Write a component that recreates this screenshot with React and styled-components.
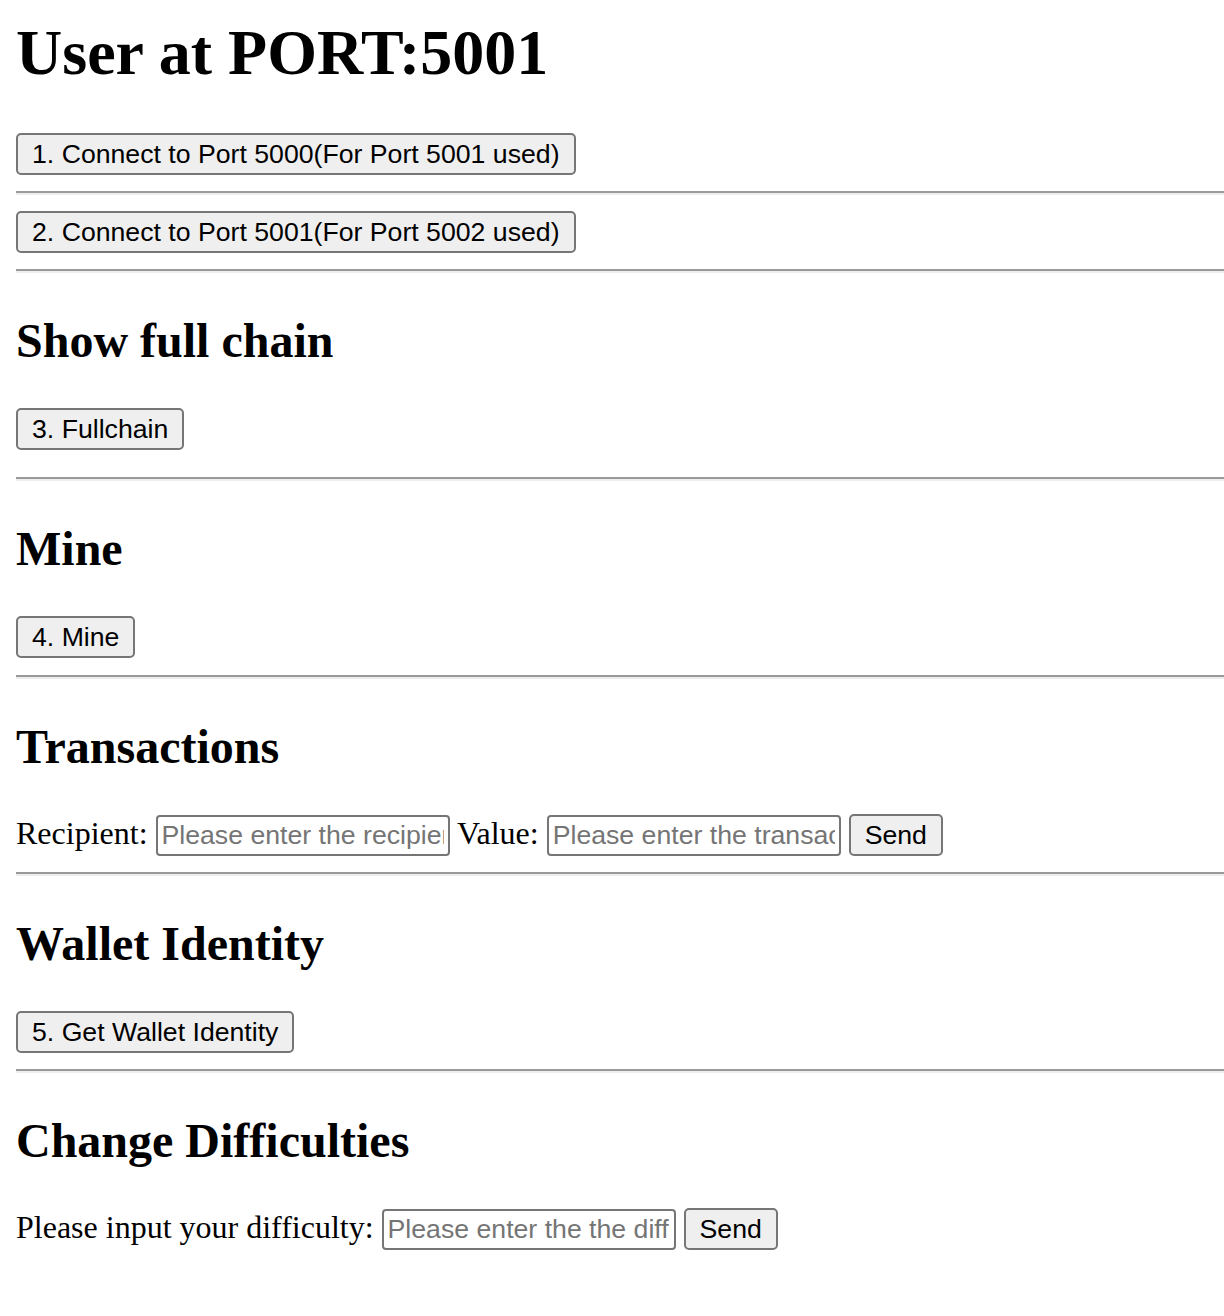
import React, { useState } from 'react';
import styled, { createGlobalStyle } from 'styled-components';

const GlobalStyle = createGlobalStyle`
  body {
    margin: 16px 0 0 16px;
    font-family: 'Liberation Serif', 'Times New Roman', serif;
    font-size: 32px;
    color: #000;
    background: #fff;
  }
`;

const Title = styled.h1`
  font-size: 64px;
  font-weight: bold;
  margin: 0 0 43px;
`;

const SectionTitle = styled.h2`
  font-size: 48px;
  font-weight: bold;
  margin: 40px 0;
`;

const Row = styled.div`
  font-size: 32px;
  padding-bottom: ${(p) => p.$extra || 0}px;
`;

const Divider = styled.hr`
  margin: 16px 0;
  height: 0;
  border: none;
  border-top: 2px solid #9a9a9a;
  border-bottom: 2px solid #eeeeee;
`;

const Button = styled.button`
  font-family: 'Liberation Sans', Arial, sans-serif;
  font-size: 26.67px;
  line-height: 30px;
  color: #000;
  background: #efefef;
  border: 2px solid #767676;
  border-radius: 5px;
  padding: 4px 14px;
  cursor: pointer;
`;

const Input = styled.input`
  font-family: 'Liberation Sans', Arial, sans-serif;
  font-size: 26.67px;
  width: 294px;
  height: 41px;
  box-sizing: border-box;
  padding: 2px 4px;
  border: 2px solid #767676;
  border-radius: 4px;
  vertical-align: baseline;

  &::placeholder {
    color: #757575;
  }
`;

const App = () => {
  const [recipient, setRecipient] = useState('');
  const [value, setValue] = useState('');
  const [difficulty, setDifficulty] = useState('');

  return (
    <>
      <GlobalStyle />
      <Title>User at PORT:5001</Title>
      <Row>
        <Button>1. Connect to Port 5000(For Port 5001 used)</Button>
      </Row>
      <Divider />
      <Row>
        <Button>2. Connect to Port 5001(For Port 5002 used)</Button>
      </Row>
      <Divider />

      <SectionTitle>Show full chain</SectionTitle>
      <Row $extra={11}>
        <Button>3. Fullchain</Button>
      </Row>
      <Divider />

      <SectionTitle>Mine</SectionTitle>
      <Row $extra={1}>
        <Button>4. Mine</Button>
      </Row>
      <Divider />

      <SectionTitle>Transactions</SectionTitle>
      <Row>
        Recipient:{' '}
        <Input
          placeholder="Please enter the recipient address"
          value={recipient}
          onChange={(e) => setRecipient(e.target.value)}
        />{' '}
        Value:{' '}
        <Input
          placeholder="Please enter the transaction value"
          value={value}
          onChange={(e) => setValue(e.target.value)}
        />{' '}
        <Button>Send</Button>
      </Row>
      <Divider />

      <SectionTitle>Wallet Identity</SectionTitle>
      <Row>
        <Button>5. Get Wallet Identity</Button>
      </Row>
      <Divider />

      <SectionTitle>Change Difficulties</SectionTitle>
      <Row>
        Please input your difficulty:{' '}
        <Input
          placeholder="Please enter the the difficulty"
          value={difficulty}
          onChange={(e) => setDifficulty(e.target.value)}
        />{' '}
        <Button>Send</Button>
      </Row>
    </>
  );
};

export default App;
